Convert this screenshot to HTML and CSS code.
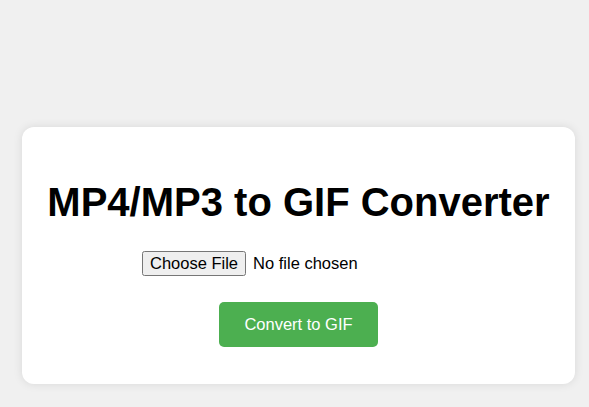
FILE: index.html
```html
<!DOCTYPE html>
<html>
<head>
<meta charset="utf-8">
<link rel="stylesheet" href="styles.css">
</head>
<body>
<div class="card">
  <h1 class="title">MP4/MP3 to GIF Converter</h1>
  <form class="form">
    <input type="file" class="file" accept="video/mp4,audio/mp3">
    <button type="button" class="btn">Convert to GIF</button>
  </form>
</div>
</body>
</html>
```
FILE: styles.css
```css
html, body {
  margin: 0;
  padding: 0;
}
body {
  background: #f0f0f0;
  font-family: "Liberation Sans", Arial, sans-serif;
  padding-top: 127px;
  height: 407px;
  box-sizing: border-box;
  overflow: hidden;
}
.card {
  width: 553px;
  margin-left: 22px;
  box-sizing: border-box;
  background: #fff;
  border-radius: 12px;
  box-shadow: 0 0 10px rgba(0, 0, 0, 0.1);
  padding: 20px;
  text-align: center;
  height: 257px;
}
.title {
  font-size: 40px;
  font-weight: bold;
  margin: 33px 0 26px;
  color: #000;
}
.form {
  display: flex;
  flex-direction: column;
  align-items: center;
}
.file {
  font-family: "Liberation Sans", Arial, sans-serif;
  font-size: 16.5px;
  margin: 0 0 26px 0;
}
.file::file-selector-button {
  font-family: "Liberation Sans", Arial, sans-serif;
  font-size: 16.5px;
  padding: 1px 6px;
  margin-right: 7px;
}
.btn {
  background: #4caf50;
  color: #fff;
  border: none;
  border-radius: 5px;
  font-family: "Liberation Sans", Arial, sans-serif;
  font-size: 16.5px;
  padding: 13px 25.5px;
  cursor: pointer;
}
```
